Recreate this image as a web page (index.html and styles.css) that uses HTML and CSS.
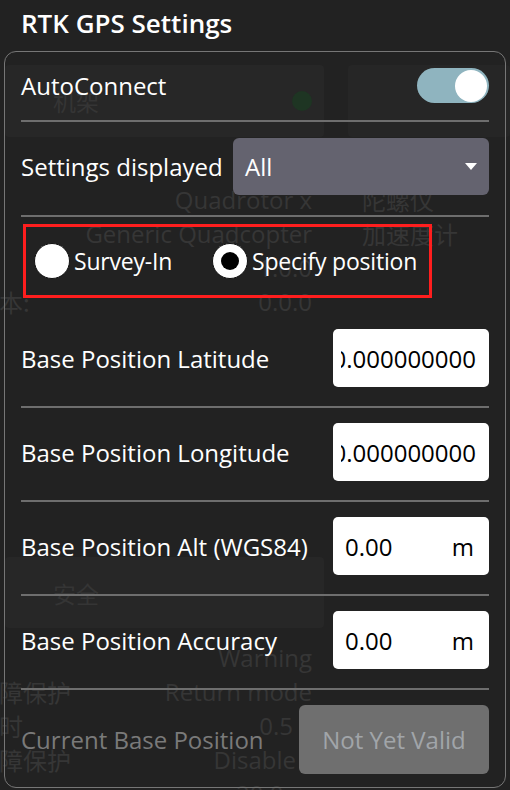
FILE: index.html
```html
<!DOCTYPE html>
<html lang="en">
<head>
<meta charset="utf-8">
<title>RTK GPS Settings</title>
<link rel="stylesheet" href="styles.css">
</head>
<body>
<div class="ghost">
  <div class="g-head">
    <div class="g-box g-box-l"><span class="g-cjk">机架</span><span class="g-dot"></span></div>
    <div class="g-box g-box-r"></div>
  </div>
  <div class="g-rows g-rows-a">
    <div class="g-row"><div class="g-cell"><span class="g-lab"></span><span class="g-val">Quadrotor x</span></div><span class="g-r">陀螺仪</span></div>
    <div class="g-row"><div class="g-cell"><span class="g-lab"></span><span class="g-val">Generic Quadcopter</span></div><span class="g-r">加速度计</span></div>
    <div class="g-row"><div class="g-cell"><span class="g-lab"></span><span class="g-val">1.0.0</span></div><span class="g-r"></span></div>
    <div class="g-row"><div class="g-cell"><span class="g-lab">版本:</span><span class="g-val">0.0.0</span></div><span class="g-r"></span></div>
  </div>
  <div class="g-head g-head-2">
    <div class="g-box g-box-l"><span class="g-cjk">安全</span></div>
  </div>
  <div class="g-rows g-rows-b">
    <div class="g-row"><div class="g-cell"><span class="g-lab"></span><span class="g-val">Warning</span></div><span class="g-r"></span></div>
    <div class="g-row"><div class="g-cell"><span class="g-lab">故障保护</span><span class="g-val">Return mode</span></div><span class="g-r"></span></div>
    <div class="g-row"><div class="g-cell"><span class="g-lab">超时</span><span class="g-val g-val-in">0.5</span></div><span class="g-r"></span></div>
    <div class="g-row"><div class="g-cell"><span class="g-lab">故障保护</span><span class="g-val g-val-in2">Disable</span></div><span class="g-r"></span></div>
    <div class="g-row"><div class="g-cell"><span class="g-lab"></span><span class="g-val">20.0 m</span></div><span class="g-r"></span></div>
  </div>
</div>

<div class="dialog">
  <h1 class="title">RTK GPS Settings</h1>
  <div class="panel">
    <div class="row row-first">
      <span class="label">AutoConnect</span>
      <div class="toggle"><span class="knob"></span></div>
    </div>
    <div class="row row-select">
      <span class="label">Settings displayed</span>
      <div class="select"><span>All</span><span class="caret"></span></div>
    </div>
    <div class="row row-radio">
      <div class="radio-group">
        <div class="opt opt-first"><span class="radio"></span><span class="label label-radio">Survey-In</span></div>
        <div class="opt"><span class="radio radio-on"><span class="dot"></span></span><span class="label label-radio">Specify position</span></div>
      </div>
    </div>
    <div class="row row-lat">
      <span class="label">Base Position Latitude</span>
      <div class="field field-num"><div class="clip"><span>0.000000000</span></div></div>
    </div>
    <div class="row">
      <span class="label">Base Position Longitude</span>
      <div class="field field-num"><div class="clip"><span>0.000000000</span></div></div>
    </div>
    <div class="row">
      <span class="label">Base Position Alt (WGS84)</span>
      <div class="field field-unit"><span>0.00</span><span>m</span></div>
    </div>
    <div class="row">
      <span class="label">Base Position Accuracy</span>
      <div class="field field-unit"><span>0.00</span><span>m</span></div>
    </div>
    <div class="row row-last">
      <span class="label label-dim">Current Base Position</span>
      <div class="btn">Not Yet Valid</div>
    </div>
  </div>
</div>
</body>
</html>
```

FILE: styles.css
```css
* { box-sizing: border-box; }
html, body {
  margin: 0;
  padding: 0;
  width: 510px;
  height: 790px;
  overflow: hidden;
  background: #222222;
  font-family: "Open Sans", "Noto Sans CJK SC", sans-serif;
  position: relative;
}

/* faint page behind the dialog */
.ghost {
  padding-top: 65px;
  color: #363636;
  font-size: 24px;
}
.g-head {
  display: grid;
  grid-template-columns: 319px 162px;
  column-gap: 24px;
  padding-left: 5px;
  height: 72px;
}
.g-head-2 { margin-top: 238px; height: 71px; }
.g-box {
  background: #272727;
  border-radius: 4px;
  display: flex;
  align-items: center;
  justify-content: space-between;
  padding: 0 12px 0 48px;
}
.g-box-r { background: #262626; }
.g-cjk { font-family: "Noto Sans CJK SC", sans-serif; font-size: 23px; color: #353535; }
.g-dot {
  width: 20px;
  height: 20px;
  border-radius: 50%;
  background: #1e3523;
}
.g-rows-a { margin-top: 46px; }
.g-rows-b { margin-top: 13px; }
.g-row {
  display: grid;
  grid-template-columns: 312px 1fr;
  column-gap: 50px;
  height: 34px;
  line-height: 34px;
  white-space: nowrap;
}
.g-cell {
  display: flex;
  justify-content: space-between;
}
.g-lab { margin-left: -25px; font-family: "Noto Sans CJK SC", sans-serif; }
.g-val-in { padding-right: 19px; }
.g-val-in2 { padding-right: 16px; }
.g-r { font-family: "Noto Sans CJK SC", sans-serif; }

/* dialog overlay */
.dialog {
  position: absolute;
  top: 0;
  left: 0;
  width: 510px;
  padding: 5px 4px 0;
  color: #ffffff;
}
.title {
  margin: 0 0 10px;
  padding-left: 17px;
  font-size: 26px;
  line-height: 36px;
  font-weight: 600;
}
.panel {
  border: 1px solid #767676;
  border-radius: 12px;
  padding: 0 16px 13px;
}
.row {
  display: flex;
  align-items: center;
  justify-content: space-between;
  padding: 15px 0 19px;
  border-bottom: 2px solid #6e6e6e;
}
.row-first { padding: 16px 0 17px; }
.row-select { padding: 16px 0 20px; }
.row-radio { border-bottom: none; padding: 7px 0 16px; }
.row-last { border-bottom: none; padding: 15px 0 0; }

.label {
  font-size: 24px;
  white-space: nowrap;
}
.label-radio {
  font-size: 23px;
  letter-spacing: -0.2px;
}
.label-dim { color: #7a7a7a; }

.toggle {
  width: 72px;
  height: 35px;
  border-radius: 18px;
  background: #8fb4bf;
  display: flex;
  align-items: center;
  justify-content: flex-end;
  padding: 0 2px;
}
.knob {
  width: 32px;
  height: 32px;
  border-radius: 50%;
  background: #ffffff;
}

.select {
  width: 256px;
  height: 57px;
  border-radius: 6px;
  background: #64636f;
  display: flex;
  align-items: center;
  justify-content: space-between;
  padding: 0 12px 0 12px;
  font-size: 24px;
}
.caret {
  width: 0;
  height: 0;
  border-left: 6px solid transparent;
  border-right: 6px solid transparent;
  border-top: 7px solid #ffffff;
}

.radio-group {
  display: flex;
  align-items: center;
  width: 409px;
  height: 74px;
  margin-left: 2px;
  border: 3px solid #ff1e1e;
  padding: 0 0 0 8px;
}
.opt {
  display: flex;
  align-items: center;
  gap: 4px;
}
.opt-first { width: 178px; }
.radio {
  width: 36px;
  height: 36px;
  border-radius: 50%;
  background: #ffffff;
  border: 1.5px solid #111111;
  display: flex;
  align-items: center;
  justify-content: center;
}
.dot {
  width: 18px;
  height: 18px;
  border-radius: 50%;
  background: #000000;
}

.field {
  width: 156px;
  height: 58px;
  border-radius: 5px;
  background: #ffffff;
  color: #000000;
  font-size: 24px;
  display: flex;
  align-items: center;
}
.field-num { padding: 0 13px 0 8px; }
.clip {
  flex: 1;
  overflow: hidden;
  display: flex;
  justify-content: flex-end;
  white-space: nowrap;
}
.field-unit {
  justify-content: space-between;
  padding: 0 15px 0 12px;
}

.btn {
  width: 190px;
  height: 69px;
  border-radius: 6px;
  background: #6f6f6f;
  color: #a1a5a9;
  font-size: 24px;
  display: flex;
  align-items: center;
  justify-content: center;
}
```
